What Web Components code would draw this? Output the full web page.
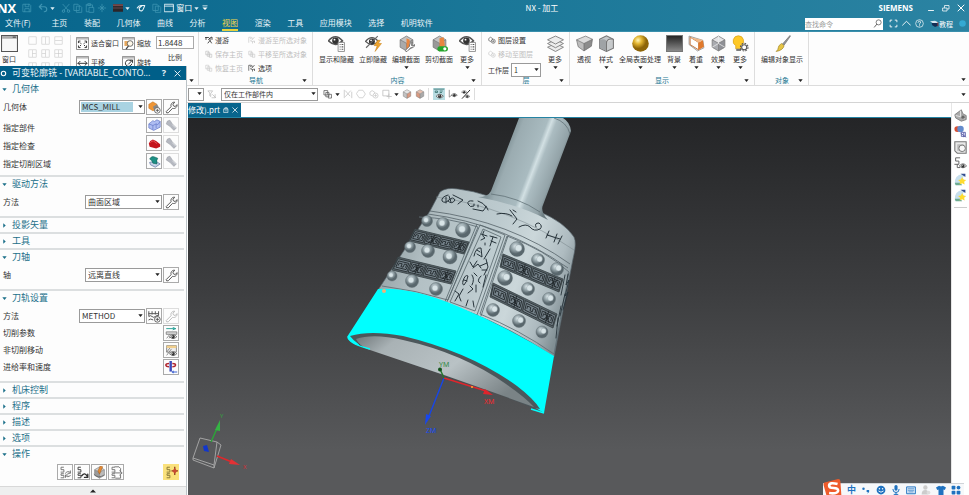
<!DOCTYPE html>
<html lang="zh-CN">
<head>
<meta charset="utf-8">
<title>NX - 加工</title>
<style>
html,body{margin:0;height:100%}
body{font:8px/10px "Noto Sans CJK SC","Noto Sans",sans-serif;color:#333;background:#fff;overflow:hidden}
</style>
</head>
<body>
<nx-app></nx-app>
<script>
const grid = (extra) => `<rect x="1.5" y="1.5" width="13" height="13" fill="none" stroke="#c4c4c4"/>${extra}`;
const wrench = c => `<path d="M1.500 13 7.500 7C6.500 4 9 1 12 1.500L9.800 4l.6 2 2 .8L15 4.500C15 8 12 10 9.300 9L4 14.500Q1.500 15.500 1.500 13z" fill="#fff" stroke="${c}" stroke-width="1.200" stroke-linejoin="round"/>`;
const torch = '<path d="M3 2.500 6 1.500 9 6l5 5-3 3-5-5L1.500 6z" fill="#b5b8c0" stroke="#9a9da5" stroke-width=".7"/><path d="m9 7 4 4" stroke="#e4e6ea"/>';
const eye = (x, y, s) => `<g transform="translate(${x} ${y}) scale(${s})"><path d="M-6 0Q0-7 6 0Q0 6-6 0z" fill="#fff" stroke="#555" stroke-width="1.300"/><circle r="2.800" fill="#333"/><circle cx="-.8" cy="-1" r=".8" fill="#fff"/></g>`;
const cube = (a, b, c) => `<path d="M2 4.500 8 1l6 3.500-6 3.300z" fill="${a}"/><path d="M2 4.500v7L8 15V7.800z" fill="${b}"/><path d="M14 4.500v7L8 15V7.800z" fill="${c}"/><path d="M2 4.500 8 1l6 3.500v7L8 15l-6-3.500zM2 4.500l6 3.300 6-3.300M8 7.800V15" fill="none" stroke="#777" stroke-width=".7"/>`;
const list = '<path d="M9.500 7h6v8.500h-6z" fill="#fff" stroke="#888" stroke-width=".8"/><path d="M11 9h.8m1 0h1.600M11 11.200h.8m1 0h1.600M11 13.400h.8m1 0h1.600" stroke="#555"/>';
const person = c => `<path d="M1.500 2.500h5M1.500 2.500v11M4 6l4-3 1 4 4-5M8 7l-3 3 4 1v4M9 11l4-1v4" fill="none" stroke="${c}" stroke-width="1.300"/>`;
const pages = c => `<path d="M1.500 2.500h6v7h-6zM4.500 5.500h5v7h-5zM8.500 8.500h5v6h-5z" fill="#fff" stroke="${c}" stroke-width="1.200"/>`;
const ess = c => `<path d="M6 1.500H2.500v3H6v3H2M6 9.500H2.500v2H6v3H2" fill="none" stroke="${c}" stroke-width="1.200"/>`;
const layers = c => `<path d="M1.500 5 5 2.500 9 5v4L5.500 11 1.500 9z" fill="#fff" stroke="${c}" stroke-width="1.200"/><circle cx="10.500" cy="10.500" r="4" fill="#fff" stroke="${c}" stroke-width="1.200"/><path d="M8 10.500h5M10.500 8v5" stroke="${c}"/>`;
const line = (d, c = '#555', w = 1.2) => `<path d="${d}" fill="none" stroke="${c}" stroke-width="${w}" stroke-linecap="round" stroke-linejoin="round"/>`;
const frame = '<path d="M.6.6h14.800v14.800H.6z" fill="#fff" stroke="#777"/><path d="M1 1h14v2.200H1z" fill="#bbb"/>';

const ICONS = {
  down: '<path d="M1 4h14l-7 9z" fill="currentColor"/>',
  right: '<path d="M4 1v14l8-7z" fill="currentColor"/>',
  up: '<path d="M0 12h16L8 4z" fill="currentColor"/>',
  customize: '<path d="M3 3h10v1.500H3zM3 7h10l-5 5z" fill="currentColor"/>',
  save: line('M2 2h10l2 2v10H2zM5 2v4h6V2M4.500 14V9h7v5', 'currentColor'),
  undo: line('M6 2 2 6l4 4M2 6h8q4 0 4 4t-4 4', 'currentColor', 1.8),
  cut: line('M3 2l8 9M13 2 5 11', 'currentColor') + '<g fill="none" stroke="currentColor" stroke-width="1.500"><circle cx="4" cy="13" r="2"/><circle cx="12" cy="13" r="2"/></g>',
  copy: line('M2 2h6l2 2v8H2zM6 5h6l2 2v8H6z', 'currentColor'),
  paste: line('M2 3h10v4M2 3v11h4M5 1h4v3H5zM7 7h7v8H7z', 'currentColor'),
  cross: line('M8 2v12M2 8h12M5 5l6 6M11 5l-6 6', 'currentColor'),
  dark: '<path d="M0 2h16v12H0z" fill="#2c2528"/><path d="M0 2h16v3H0z" fill="#774a4c"/><path d="M0 8h16" stroke="#806066"/>',
  touch: line('M2 8q2-4 6-4h6l-2 5q-2 5-6 3l-1-4 5-4', '#e9f5f9', 1.7),
  windowW: line('M1 2h14v12H1zM1 5h14', '#e8f4f8', 1.4),
  min: line('M3 13h10', '#fff', 1.8),
  restore: line('M2 8h8v6H2zM5 7V3h9v7h-3', '#fff', 1.5),
  close: line('M2 2l12 12M14 2 2 14', '#fff', 2),
  gear: '<circle cx="8" cy="8" r="5" fill="none" stroke="#fff" stroke-width="2.500"/>',
  search: '<circle cx="10" cy="6" r="4.500" fill="none" stroke="#555" stroke-width="1.300"/><path d="M7 9l-5 6" stroke="#555" stroke-width="1.600"/>',
  full: line('M2 5V2h3M11 2h3v3M14 11v3h-3M5 14H2v-3', '#fff', 1.6),
  chev: line('M1 11l7-7 7 7', '#fff', 1.6),
  help: '<circle cx="8" cy="8" r="6.800" fill="none" stroke="#fff" stroke-width="1.200"/>' + line('M5.500 6Q6 3.500 8.500 4T9.500 7Q8 8 8 9.500M8 12v.3', '#fff', 1.4),
  hat: '<path d="M0 4l9-1 6 3-8 3z" fill="#d5e6f0"/><path d="M3 7h11v5l-5 2-5-3z" fill="#132e55"/><path d="M14 6v7" stroke="#a33" stroke-width="1.500"/>',
  dot: '<circle cx="8" cy="8" r="7.500" fill="#35a9d3"/>',
  window: '<path d="M.5.5h15v15H.5z" fill="#f7f7f7" stroke="#555"/><path d="M1 1h14v2.500H1z" fill="#aaa"/><path d="M11 2h3" stroke="#444"/>',
  g1: grid(''), g2: grid('<path d="M8 2v12" stroke="#c4c4c4"/>'), g3: grid('<path d="M2 8h12" stroke="#c4c4c4"/>'),
  g4: grid('<path d="M8 2v12M8 8h6" stroke="#c4c4c4"/>'), g5: grid('<path d="M8 2v12M2 8h6" stroke="#c4c4c4"/>'), g6: grid('<path d="M8 2v12M2 8h12" stroke="#c4c4c4"/>'),
  fit: frame + line('M3 7V5h2M11 5h2v2M13 11v2h-2M5 13H3v-2M5 7l1 1M11 7l-1 1M5 11l1-1M11 11l-1-1', '#333'),
  zoom: frame + '<path d="M3 5h6v6H3z" fill="#e6a75c"/><circle cx="10" cy="8" r="3.500" fill="#fff8e8" stroke="#555"/><path d="M8 11l-3 4" stroke="#444" stroke-width="1.500"/>',
  pan: frame + line('M2.500 9h11M5 6.500 2.500 9 5 11.500M11 6.500 13.500 9 11 11.500', '#333'),
  rotate: frame + line('M11 6a4 4 0 1 0 1 4M8 10l5-5M10 5h3v3', '#333'),
  walk: line('M1 3h6M2 3v4M7 7l3-3v5l-4 5M10 9l3 5M10 4l4-2v5', '#333', 1.7),
  walkTo: person('#c5c5c5'), home: pages('#bbb'), home2: pages('#c8c8c8'), panTo: pages('#c5c5c5'), options: person('#333'),
  show: eye(7, 5.5, 1.1) + list,
  hide: eye(6.5, 6, 1) + '<path d="M1 12 12 1" stroke="#666"/><path d="M12 5 8.500 10h3l-2 5.500 6-7.500h-3l2-3z" fill="#f0a52e" stroke="#c98014" stroke-width=".5"/>',
  section: cube('#c4c4c4', '#aaa', '#999') + '<path d="M8 3l3 1.500v8L8 14z" fill="#e88640"/><g transform="translate(6 6) scale(.65)">' + wrench('#666') + '</g>',
  clip: cube('#c4c4c4', '#999', '#aaa') + '<path d="M8 3l4-1 1 8-5 2z" fill="#e88640"/><rect x="6" y="10.500" width="10" height="5" rx="2.500" fill="#25a52b"/><circle cx="13" cy="13" r="1.500" fill="#fff"/>',
  layer: layers('#444'), layerMove: layers('#c5c5c5'),
  stack: '<g fill="#ececec" stroke="#777" stroke-width=".8"><path d="M.5 11.500l7.500-3.500 7.500 3.500-7.500 4z"/><path d="M.5 8l7.500-3.500L15.500 8 8 12z"/><path d="M.5 4.500L8 1l7.500 3.500-7.500 4z"/></g>',
  persp: '<path d="M.5 4.500 9 1l6.500 3-8 4z" fill="#dcdcdc"/><path d="M.5 4.500 7.500 8v7L2 11z" fill="#bdbdbd"/><path d="M15.500 4l-8 4v7l7-4.500z" fill="#8c8c8c"/><path d="M.5 4.500 9 1l6.500 3-1 6.500-7 4.500L2 11zM.5 4.500l7 3.500 8-4M7.500 8v7" fill="none" stroke="#666" stroke-width=".6"/>',
  style: '<path d="M1.500 4 8 .8l6.500 3.200v8.500L8 15.500l-6.500-3z" fill="#c6c9cb" stroke="#777"/><path d="M1.500 4.500q7-2 6.500 3v7.500l-6.500-3z" fill="#9fa3a6"/><path d="M8 7q1-4 6-3" fill="#ddd" stroke="#777"/><path d="M8 6v9" stroke="#777"/>',
  gold: '<radialGradient id="g" cx=".35" cy=".3"><stop stop-color="#fff7bc"/><stop offset=".45" stop-color="#e3b532"/><stop offset="1" stop-color="#8e6508"/></radialGradient><circle cx="8" cy="8" r="7.800" fill="url(#g)"/>',
  bg: '<linearGradient id="b" x2="0" y2="1"><stop stop-color="#222"/><stop offset="1" stop-color="#8d8d8d"/></linearGradient><path d="M.5.5h15v15H.5z" fill="url(#b)" stroke="#777"/>',
  weight: '<path d="M1 1 14 5l1 7-6 3-8-6z" fill="#e9e9e9" stroke="#888" stroke-width=".7"/><path d="M2 2l8 5v7L2 9z" fill="#fff" stroke="#c6743c" stroke-width=".9"/><path d="M10 7l4-2 1 6-5 3z" fill="#e0792c"/><path d="M2 2l9 2 3 1-4 2z" fill="#f0b888"/>',
  effect: cube('#e4e4e6', '#a9abb0', '#8e9096') + '<path d="M2 11.500 8 8l6 3.500M8 8V1" stroke="#eee" stroke-width=".7" fill="none"/>',
  bulb: '<path d="M6 .7a5 5 0 0 0-2.500 9.300v3h5v-3A5 5 0 0 0 6 .7z" fill="#ffc928" stroke="#d39a10" stroke-width=".6"/><path d="M4 13h4.500v2H4z" fill="#777"/><circle cx="11.500" cy="11.500" r="2.400" fill="#fff" stroke="#555" stroke-width="1"/><circle cx="11.500" cy="11.500" r="3.600" fill="none" stroke="#555" stroke-width="1" stroke-dasharray="1.600 1.200"/>',
  brush: '<path d="M15 .5 8 8.500l1.500 1L15.500 1z" fill="#999" stroke="#666" stroke-width=".6"/><path d="M7 8l2.500 2q-1 4.500-7.500 5.500 2-1.500 2-3.500T7 8z" fill="#e6c545" stroke="#9c7f20" stroke-width=".6"/>',
  filter: line('M2 3h7L6 7v5L4.500 11V7zM9 9l5 5M13 9v5H8', '#bbb'),
  sel: pages('#555'), selA: line('M2 2v12M14 5v9M4 3l7 8M12 3 4 12', '#c0c0c0'),
  hex: line('M5 2h6l4 6-4 6H5L1 8z', '#c8c8c8'), selB: layers('#c5c5c5'), selC: line('M2 2h9v9H2zM11 8v7M8 12h7', '#bbb'),
  cubeO: cube('#e5e5e5', '#c2c2c2', '#d89a82'), cubeR: cube('#e5c0b0', '#d99a80', '#aaa'),
  view1: '<path d="M1 1.500h14M3 4h3v2H3zM9 4h4M9 6h3" stroke="#2f6a66" fill="none"/>' + eye(9, 11, .8), view2: line('M2 2v11l5-4', '#777') + eye(10, 10, .8),
  view3: line('M2 15 14 2', '#333', 1.6) + eye(5, 5, .7) + eye(10, 12, .7),
  lock: line('M3 5h10v10H3zM5 5V2h6v3M8 8v3', '#fff', 1.8),
  newGeo: '<path d="M1 4l5-3 5 3v6l-5 2-5-3z" fill="#ef9636" stroke="#b96b1a" stroke-width=".6"/><path d="M6 7l5-3 2 3v6l-4 1z" fill="#888"/><circle cx="11.500" cy="11.500" r="3.500" fill="#fff" stroke="#555"/><path d="M9.500 11.500h4M11.500 9.500v4" stroke="#555"/>',
  wrench: wrench('#555'), wrenchOff: wrench('#bbb'), torch,
  part: '<path d="M1 6l5-4 2 1 3-2 4 2v7l-8 4-6-3z" fill="#aebdf2" stroke="#5f72c4" stroke-width=".8"/><path d="M1 6l5 2 4-2 2 1 3-4M6 8v5M10 6v5" fill="none" stroke="#5f72c4" stroke-width=".8"/>',
  check: '<path d="M1 8q1-4 5-5l4 2 5 4v3l-5 2-8-2z" fill="#c4151d"/><path d="M3 7q2-3 4-2l4 3" stroke="#ef6468" fill="none"/>',
  area: '<path d="M2 9l8-1 5 3-6 4-6-3z" fill="#c7d4e8" stroke="#6f83ad"/><path d="M2 5q2-4 5-3l5 2q-2 2-1 7l-5-1Q5 6 2 5z" fill="#1c8f84" stroke="#0d5d58" stroke-width=".7"/>',
  newMethod: line('M1 2v6q2-2 4 0t4 0 4-1V2M1 4.500h12M1 12q2-2 5 0M5 2v3M9 2v3', '#555') + '<circle cx="11.500" cy="11.500" r="3.500" fill="#fff" stroke="#444"/><path d="M9.500 11.500h4M11.500 9.500v4" stroke="#444"/>',
  cutp: line('M2 2h11M10 .7 13 2l-3 1.300', '#2aa198') + '<path d="M1.500 6h13v3h-13z" fill="#ddd" stroke="#777"/><path d="M2 14l4-5M5 14l3-4" stroke="#777"/>' + eye(10, 12, .75),
  noncut: '<path d="M2 2h12v8H2z" fill="#eee" stroke="#777"/><path d="M2 2h12v3H2z" fill="#f1cf8d"/><path d="M2 14l6-8M2 10l4-5" stroke="#777"/>' + eye(10, 12, .75),
  feed: '<path d="M5.500 0h3v13h-3z" fill="#3c4bbb"/><path d="M1 5q0-2 4-2M9 3q4 0 4 2t-4 2M1 5q0 2 4 2" fill="none" stroke="#b02630" stroke-width="1.800"/><path d="M9 13.500h6M10.500 12 9 13.500l1.500 1.500" stroke="#3f63d0" stroke-width="1.300" fill="none"/>',
  gen: ess('#777') + line('M8 9q2-4 6-1M14 6v3h-3M14 12q-3 3-6 0M8 14v-3h3', '#777'),
  replay: ess('#444') + line('M7 12q4-5 7 1M14.500 10v4h-4', '#333', 1.7),
  verify: cube('#cfcfcf', '#9a9a9a', '#bbb') + '<path d="M9 0 6 6l2 4 4-9z" fill="#e58a32" stroke="#9d571a" stroke-width=".6"/><path d="M1 10q5 6 13 1" stroke="#666" fill="none"/>',
  post: ess('#777') + line('M6 1h5l2 2v3M13 11v4H7M5 8.500h9M12 6l3 2.500-3 2.500', '#777'),
  tool: ess('#8a7a3a') + '<path d="M8 6h8M12 1v10" stroke="#8c3d1e" stroke-width="1.600"/><path d="M12 2.500l3 3.500-3 3.500L9 6z" fill="#c84b33"/>',
  nav1: '<path d="M1 7l8-6 2 5 4 2v5l-6 2-7-4z" fill="#aaa" stroke="#777"/><path d="M2 8q7 1 11 4M8 2v7" stroke="#eee" fill="none"/><circle cx="11" cy="10" r="2" fill="#666"/>',
  nav2: '<circle cx="4" cy="5" r="3.500" fill="#d65034"/><circle cx="8" cy="5" r="4" fill="#648ccc"/><path d="M9 9h5v5H9z" fill="#eef" stroke="#5258a0"/><path d="M8 10l7 5M12 9v6" stroke="#5258a0"/>',
  nav3: '<path d="M1 1h14v14H4L1 12z" fill="#e8e8e8" stroke="#777" stroke-width="1.300"/><path d="M4 4h8v8H4z" fill="#bbb"/><circle cx="10" cy="9" r="4" fill="#f8f8f8" stroke="#777" stroke-width="1.200"/>',
  nav4: line('M7 1H2v4h4v4H1M4 9v4h3', '#666') + eye(11, 11, .75),
  nav5: '<path d="M3 5q4-5 10-3l-2 4q4 5-3 7l-7 1q-1-5 2-9z" fill="#c7dfed"/><path d="M8 1h6v4z" fill="#344e90"/><path d="M1 12h7l2 3H2z" fill="#6cab91"/><path d="M10 5l1.500 3 3.500.5-2.500 2.300.6 3.500-3.100-1.600-3.100 1.600.6-3.500L5 8.500 8.500 8z" fill="#ffdc2f"/>',
  sogou: '<path d="M1 3 13 0q2 0 2 2l1 14H3L0 5q0-2 1-2z" fill="#ee5b2b"/><path d="M12.500 4.500Q5 2.500 5 6q0 2 4 2t4 2.500Q12 13.500 5 12.500" fill="none" stroke="#fff" stroke-width="2.300"/>',
  comma: '<circle cx="4" cy="6" r="2" fill="#1f72c0"/><path d="M9 8h4v3l-3 3 1-3H9z" fill="#1f72c0"/>',
  smile: '<circle cx="8" cy="8" r="7" fill="#1f72c0"/><circle cx="5.500" cy="6" r="1.200" fill="#fff"/><circle cx="10.500" cy="6" r="1.200" fill="#fff"/><path d="M4 9.500q4 4 8 0" stroke="#fff" stroke-width="1.500" fill="none"/>',
  mic: '<rect x="5.500" y="0" width="5" height="9" rx="2.500" fill="#1f72c0"/>' + line('M3 7q0 5 5 5t5-5M8 12v3M5 15h6', '#1f72c0', 1.6),
  keys: '<path d="M1 3h14v11H1z" fill="#dceaf7" stroke="#1f72c0" stroke-width="1.500"/><path d="M3 6h10M3 8.500h10M4 11h8" stroke="#1f72c0"/>',
  user: '<circle cx="7" cy="4" r="3.500" fill="#ccc"/><path d="M1 15q0-7 6-7 3 0 4 2v5z" fill="#ccc"/><circle cx="12" cy="12" r="3" fill="#ddd"/>',
  shirt: '<path d="M5 1q3 2 6 0l5 3-2 4-2-1v9H4V7L2 8 0 4z" fill="#1f72c0"/>',
  apps: '<g fill="#1f72c0"><rect x="1" y="1" width="6" height="6" rx="1.500"/><rect x="9" y="1" width="6" height="6" rx="3"/><rect x="1" y="9" width="6" height="6" rx="1.500"/><rect x="9" y="9" width="6" height="6" rx="1.500"/></g>'
};

function define(tag, css, html) {
  customElements.define(tag, class extends HTMLElement {
    connectedCallback() {
      if (this.shadowRoot) return;
      const root = this.attachShadow({ mode: 'open' });
      const body = typeof html === 'function' ? html(this) : html;
      root.innerHTML = `<style>*{box-sizing:border-box}button,input,select{font:inherit;color:inherit}button{margin:0;padding:0;border:0;background:none}${css}</style>${body}`;
    }
  });
}

define('nx-icon', ':host{display:inline-block;flex:none;width:10px;height:10px}svg{display:block;width:100%;height:100%}',
  el => `<svg viewBox="0 0 16 16" aria-hidden="true">${ICONS[el.getAttribute('name')] || ''}</svg>`);

define('nx-caret', ':host{display:inline-block;flex:none;width:5px;height:5px;color:#222}nx-icon{display:block;width:100%;height:100%}',
  el => `<nx-icon name="${el.getAttribute('dir') || 'down'}"></nx-icon>`);

define('nx-select', `:host{display:inline-block;flex:none;height:14px}
  div{position:relative;height:100%}
  select{appearance:none;display:block;width:100%;height:100%;margin:0;padding:0 8px 0 2px;border:1px solid #9a9a9a;border-radius:0;background:#fff;line-height:10px;outline:0}
  :host([marked]) select{background:linear-gradient(#a9d3e2,#a9d3e2) 1px 1px/calc(100% - 12px) calc(100% - 2px) no-repeat #fff}
  nx-caret{position:absolute;right:2px;top:calc(50% - 3px);pointer-events:none}`,
  el => `<div><select aria-label="${el.getAttribute('label') || ''}"><option>${el.getAttribute('value') || ''}</option></select><nx-caret></nx-caret></div>`);

define('nx-title-bar', `:host{display:grid;grid-template-columns:1.28fr auto 1fr;align-items:center;height:16px;color:#fff}
  .quick{display:flex;align-items:center;gap:2px;color:#3f95b3}
  b.nx{font:bold 13px/16px "Open Sans","Noto Sans",sans-serif;color:#fff;margin:0 4px 0 -3px}
  nx-caret{color:#dceef4}
  .quick button{display:flex;align-items:center;gap:2px;color:inherit;line-height:8px}
  .quick .lit{color:#fff}
  .right{display:flex;justify-content:flex-end;align-items:center;gap:7px;padding-right:4px}
  .right b{font:bold 8px/10px "Open Sans",sans-serif;margin-right:7px}
  .right nx-icon{width:8px;height:8px}.right button{display:flex}
  .gap{width:2px}`,
  `<div class="quick"><b class="nx">NX</b>
    <button aria-label="保存"><nx-icon name="save"></nx-icon></button><span class="gap"></span><button aria-label="撤消"><nx-icon name="undo"></nx-icon><nx-caret></nx-caret></button><span class="gap"></span>
    <button aria-label="剪切"><nx-icon name="cut"></nx-icon></button><button aria-label="复制"><nx-icon name="copy"></nx-icon></button><button aria-label="粘贴"><nx-icon name="paste"></nx-icon></button><button aria-label="重复"><nx-icon name="cross"></nx-icon></button><span class="gap"></span>
    <button aria-label="颜色"><nx-icon name="dark"></nx-icon><nx-caret></nx-caret></button><span class="gap"></span><button aria-label="触控"><nx-icon name="touch"></nx-icon></button><span class="gap"></span><button aria-label="切换"><nx-icon name="copy"></nx-icon></button>
    <button class="lit"><nx-icon name="windowW"></nx-icon>窗口<nx-caret></nx-caret></button><nx-icon class="lit" name="customize" style="width:8px;height:8px"></nx-icon></div>
  <span>NX - 加工</span>
  <div class="right"><b>SIEMENS</b><button aria-label="最小化"><nx-icon name="min"></nx-icon></button><button aria-label="还原"><nx-icon name="restore"></nx-icon></button><button aria-label="关闭"><nx-icon name="close"></nx-icon></button></div>`);

define('nx-menu-bar', `:host{display:flex;align-items:center;justify-content:space-between;height:15px;color:#e9f4f8;padding-left:5px}
  nav{display:flex;justify-content:space-between;flex:none;width:428px;height:100%}
  nav a{color:inherit;text-decoration:none;line-height:13px;border-bottom:2px solid transparent;white-space:nowrap}
  nav a:first-child{margin-right:4px}
  nav a.on{color:#f2d74e;border-color:#e6d23e}
  .tools{display:flex;align-items:center;gap:4px;padding-right:3px}
  label{display:flex;align-items:center;background:#fff;width:78px;height:12px;padding-right:1px;margin-right:2px}
  input{flex:1;min-width:0;border:0;padding:0;background:none;font-size:7px;height:10px;color:#333;outline:0}input::placeholder{color:#999}
  .tools a{color:#fff;text-decoration:none;font-size:7px;display:flex;align-items:center;margin:0 2px}
  .tools nx-icon{width:9px;height:9px}.tools .dot{width:7px}.tools button{display:flex}`,
  `<nav>${['文件(F)', '主页', '装配', '几何体', '曲线', '分析', '视图', '渲染', '工具', '应用模块', '选择', '机明软件'].map(t => `<a href="#"${t === '视图' ? ' class="on"' : ''}>${t}</a>`).join('')}</nav>
  <div class="tools"><label><input placeholder="查找命令" aria-label="查找命令"><nx-icon name="search"></nx-icon></label>
  <button aria-label="全屏"><nx-icon name="full"></nx-icon></button><button aria-label="折叠"><nx-icon name="chev"></nx-icon></button><button aria-label="帮助"><nx-icon name="help"></nx-icon></button>
  <a href="#"><nx-icon name="hat"></nx-icon>教程</a><nx-icon class="dot" name="dot"></nx-icon></div>`);

define('nx-group', `:host{display:flex;flex-direction:column;flex:none;height:100%;padding:3px 5px 0 6px;border-right:1px solid #ddd}
  .body{display:flex;flex:1;min-height:0;gap:var(--gap,5px);align-items:flex-start}
  .foot{display:grid;grid-template-columns:5px 1fr 5px;align-items:center;text-align:center;height:10px;font-size:7px;color:#1c7792;line-height:10px}
  .foot span{grid-column:2}`,
  el => `<div class="body"><slot></slot></div><div class="foot"><span>${el.getAttribute('label') || ''}</span><nx-caret></nx-caret></div>`);

define('nx-tool', `:host{display:block;flex:none;min-width:18px}
  button{display:flex;flex-direction:column;align-items:center;width:100%;font-size:7px;line-height:10px;white-space:nowrap}
  nx-icon{width:17px;height:17px;margin-bottom:2px}nx-caret{margin-top:1px}`,
  el => `<button><nx-icon name="${el.getAttribute('icon')}"></nx-icon><slot></slot>${el.hasAttribute('menu') ? '<nx-caret></nx-caret>' : ''}</button>`);

define('nx-mini', `:host{display:block;height:14px;font-size:7px}
  button{display:flex;align-items:center;gap:2px;height:10px;white-space:nowrap;line-height:10px}
  :host([disabled]) button{color:#bdbdbd}
  nx-icon{width:var(--mini,8px);height:var(--mini,8px)}`,
  el => `<button${el.hasAttribute('disabled') ? ' disabled' : ''}><nx-icon name="${el.getAttribute('icon')}"></nx-icon><slot></slot></button>`);

define('nx-ribbon', `:host{display:flex;height:54px;background:#fdfdfd;border-bottom:1px solid #dcdcdc}
  .grid{display:grid;grid-template-columns:repeat(3,9px);gap:4px;padding:1px 2px 0 5px}
  .grid nx-icon{width:9px;height:9px}
  .win{padding-right:5px;border-right:1px solid #ddd;display:flex}
  .view{display:grid;grid-template-columns:auto auto;gap:6px 3px;--mini:13px}
  .view nx-mini{height:13px;padding-top:3px}
  .scale{display:flex;flex-direction:column;align-items:center;gap:3px;font-size:7px;padding-top:1px}
  .scale input{width:38px;height:13px;border:1px solid #aaa;background:#fff;padding:0 1px;font-size:8px}
  .col{display:flex;flex-direction:column}
  .work{display:flex;align-items:center;gap:2px;font-size:7px;height:14px}
  .work nx-select{width:30px}
  .end{flex:1;display:flex;justify-content:flex-end;align-items:flex-end;padding:3px}
  .first{padding:3px 4px 0 0}
  .tight{--gap:4px;padding-left:5px}`,
  `<nx-group class="first"><nx-tool icon="window" menu>窗口</nx-tool><div class="win"><div class="grid">${['g1','g2','g3','g4','g5','g6','g6','g6','g6'].map(n => `<nx-icon name="${n}"></nx-icon>`).join('')}</div></div>
    <div class="view"><nx-mini icon="fit">适合窗口</nx-mini><nx-mini icon="zoom">缩放</nx-mini><nx-mini icon="pan">平移</nx-mini><nx-mini icon="rotate">旋转</nx-mini></div>
    <label class="scale"><input value="1.8448">比例</label></nx-group>
  <nx-group label="导航"><div class="col"><nx-mini icon="walk">漫游</nx-mini><nx-mini icon="home" disabled>保存主页</nx-mini><nx-mini icon="home2" disabled>恢复主页</nx-mini></div>
    <div class="col"><nx-mini icon="walkTo" disabled>漫游至所选对象</nx-mini><nx-mini icon="panTo" disabled>平移至所选对象</nx-mini><nx-mini icon="options">选项</nx-mini></div></nx-group>
  <nx-group label="内容"><nx-tool icon="show">显示和隐藏</nx-tool><nx-tool icon="hide">立即隐藏</nx-tool><nx-tool icon="section" menu>编辑截面</nx-tool><nx-tool icon="clip">剪切截面</nx-tool><nx-tool icon="show" menu>更多</nx-tool></nx-group>
  <nx-group label="层"><div class="col"><nx-mini icon="layer">图层设置</nx-mini><nx-mini icon="layerMove" disabled>移动至图层</nx-mini><label class="work">工作层<nx-select label="工作层" value="1"></nx-select></label></div><nx-tool icon="stack" menu>更多</nx-tool></nx-group>
  <nx-group class="tight" label="显示"><nx-tool icon="persp">透视</nx-tool><nx-tool icon="style" menu>样式</nx-tool><nx-tool icon="gold" menu>全局表面处理</nx-tool><nx-tool icon="bg" menu>背景</nx-tool><nx-tool icon="weight" menu>着重</nx-tool><nx-tool icon="effect" menu>效果</nx-tool><nx-tool icon="bulb" menu>更多</nx-tool></nx-group>
  <nx-group label="对象"><nx-tool icon="brush">编辑对象显示</nx-tool></nx-group>
  <div class="end"><nx-caret></nx-caret></div>`);

define('nx-selection-bar', `:host{display:flex;align-items:center;gap:2px;height:17px;padding:0 3px 0 188px;border-bottom:1px solid #d4d4d4;background:#fff;font-size:7px}
  .a{width:16px}.b{width:97px;margin:0 2px}.a,.b{height:13px}nx-icon{margin-left:1px}
  i{width:1px;height:12px;background:#ddd;margin:0 1px}.on{background:#b9dde2;width:12px;height:12px}
  .end{margin-left:auto}`,
  `<nx-select class="a" label="类型过滤器"></nx-select><nx-icon name="filter"></nx-icon><nx-select class="b" label="选择范围" value="仅在工作部件内"></nx-select>
   <nx-icon name="sel"></nx-icon><nx-caret></nx-caret><nx-icon name="selA"></nx-icon><nx-icon name="hex"></nx-icon><nx-icon name="selB"></nx-icon><nx-icon name="selC"></nx-icon><nx-caret></nx-caret><nx-icon name="cubeO"></nx-icon><nx-icon name="cubeR"></nx-icon><i></i>
   <nx-icon class="on" name="view1"></nx-icon><nx-icon name="view2"></nx-icon><nx-icon name="view3"></nx-icon><i></i><nx-caret class="end"></nx-caret>`);

define('nx-doc-tabs', `:host{display:flex;height:15px;border-bottom:1px solid #2584a4;background:#fff}
  button{display:flex;align-items:center;gap:3px;padding-right:3px;background:#08658d;color:#fff;white-space:nowrap}
  nx-icon{width:6px;height:6px}`,
  `<button>修改).prt<nx-icon name="lock"></nx-icon><nx-icon name="close"></nx-icon></button>`);

define('nx-rail', `:host{display:flex;flex-direction:column;align-items:center;gap:3px;background:#fff;border-left:1px solid #e6e6e6;padding-top:6px}
  button{display:flex}nx-icon{width:13px;height:13px}hr{width:13px;margin:2px 0;border:0;border-top:1px solid #ccc}`,
  `${[['nav1', '装配导航器'], ['nav2', '约束导航器'], ['nav3', '部件导航器'], ['nav4', '工序导航器'], ['nav5', '机床导航器'], ['nav5', '重用库']].map(([n, t]) => `<button aria-label="${t}"><nx-icon name="${n}"></nx-icon></button>`).join('')}<hr>`);

const stud = ([x, y, r, dx = -1]) => `<circle cx="${x}" cy="${y}" r="${r}" fill="url(#ball)" stroke="#59656a" stroke-width=".4"/><circle cx="${x + dx}" cy="${y - 1}" r="${r * .45}" fill="#d8e4e7" stroke="#78868b" stroke-width=".3"/>`;
const studs = [[427,221,5.5],[443,224,6.5],[463,230,7.5],[410,247,5.5],[428,251,6.5],[450,257,7],[392,276,5],[412,281,6.5],[436,289,6.5],
  [517,249,7.5,1.5],[538,260,6.5,1.5],[557,269,6.5,1.5],[505,278,7.5,1.5],[528,289,6.5,1.5],[549,299,6.5,1.5],[493,310,6.5,1.5],[519,321,6.5,1.5],[542,332,6,1.5]].map(stud).join('');

/* Draws an engraved band inside a four-cornered area: corners run top-left, top-right, bottom-right, bottom-left. */
function frieze([a, b, c, d], cells) {
  const at = (u, v) => [0, 1].map(i => ((a[i] * (1 - u) + b[i] * u) * (1 - v) + (d[i] * (1 - u) + c[i] * u) * v).toFixed(1)).join(' ');
  const poly = pts => 'M' + pts.map(p => at(...p)).join('L');
  const box = (u0, v0, u1, v1) => poly([[u0, v0], [u1, v0], [u1, v1], [u0, v1]]) + 'Z';
  let cellPaths = '', marks = '';
  for (let i = 0; i < cells; i++) {
    const u = k => (i + k) / cells;
    cellPaths += box(u(.05), .12, u(.95), .88);
    marks += box(u(.15), .26, u(.85), .74) + poly([[u(.25), .6], [u(.25), .4], [u(.45), .4], [u(.45), .62], [u(.6), .62], [u(.6), .38], [u(.76), .38], [u(.76), .62]]);
    if (i % 2) marks += poly([[u(.5), .08], [u(.5), .92]]) + poly([[u(.3), .2], [u(.7), .8]]) + poly([[u(.3), .8], [u(.7), .2]]);
  }
  return `<path d="${box(0, 0, 1, 1)}" fill="#59646a" stroke="#353f43" stroke-width=".8"/><path d="${cellPaths}" fill="#75828a" stroke="#262d30" stroke-width=".8"/><path d="${marks}" fill="none" stroke="#20272a" stroke-width=".9"/>`;
}

define('nx-viewport', `:host{display:block;position:relative;min-width:0;background:linear-gradient(#242527,#3c3d3f 45%,#58595b 88%,#58595b)}
  svg{position:absolute;inset:0;width:100%;height:100%}text{font:7px "Noto Sans",sans-serif}.small{font-size:6px}`,
  `<svg viewBox="188 118 763 377" preserveAspectRatio="xMinYMin meet" role="img" aria-label="钟形零件">
  <defs>
    <linearGradient id="shaft" gradientUnits="userSpaceOnUse" x1="503" y1="155" x2="558" y2="176"><stop stop-color="#83959a"/><stop offset=".12" stop-color="#9bacb1"/><stop offset=".5" stop-color="#a9bbc0"/><stop offset=".57" stop-color="#d2e0e3"/><stop offset=".65" stop-color="#abbcc1"/><stop offset=".9" stop-color="#93a3a8"/><stop offset="1" stop-color="#6c7c81"/></linearGradient>
    <linearGradient id="body" gradientUnits="userSpaceOnUse" x1="395" y1="235" x2="570" y2="300"><stop stop-color="#98a5a9"/><stop offset=".2" stop-color="#b3c0c4"/><stop offset=".5" stop-color="#bdcbcf"/><stop offset=".7" stop-color="#cbd7da"/><stop offset=".88" stop-color="#aebbc0"/><stop offset="1" stop-color="#818f94"/></linearGradient>
    <linearGradient id="inner" x2="1" y2=".5"><stop stop-color="#6f777a"/><stop offset=".2" stop-color="#a9b2b5"/><stop offset=".6" stop-color="#b9c2c5"/><stop offset="1" stop-color="#7a8386"/></linearGradient>
    <radialGradient id="ball" cx=".4" cy=".32"><stop stop-color="#dfeaed"/><stop offset=".45" stop-color="#9faeb3"/><stop offset="1" stop-color="#59676d"/></radialGradient>
  </defs>
  <path d="M440 192Q446 187 458 189Q474 191 488 196Q516 202 540 212Q564 222 574 237Q577 243 573 259L554 357Q470 300 378 290L430 211Z" fill="url(#body)" stroke="#56636a" stroke-width=".7"/>
  <path d="M519 118H563Q570 122 571 131L543 205Q540 211 548 220Q520 205 478 197Q488 197 491 191Z" fill="url(#shaft)"/>
  <path d="M554 118Q567 122 570 134M491 194Q518 197 540 212" fill="none" stroke="#59686e" stroke-width=".7"/>
  <path d="M436 197Q510 207 574 250" fill="none" stroke="#7e8c91" stroke-width=".6"/>
  <path d="M430 211Q510 221 570 264M428 214Q505 224 568 268" fill="none" stroke="#556268" stroke-width=".8"/>
  <path d="M419 217Q450 218 478 227L448 300Q415 290 382 286M507 236Q545 250 569 272L554 354Q520 330 480 314Z" fill="none" stroke="#637077" stroke-width=".9"/>
  <path d="M480 225 505 235 477 315 446 304Z M483 229 501 237 475 311 450 302Z M477 224 444 304M508 236 481 316" fill="none" stroke="#56656a" stroke-width=".8"/>
  ${frieze([[415,229],[469,242],[464,254],[409,241]], 4)}${frieze([[398,257],[456,271],[451,284],[392,270]], 4)}
  ${frieze([[503,254],[563,279],[559,292],[500,267]], 4)}${frieze([[493,283],[557,314],[553,328],[490,297]], 4)}
  ${studs}
  <g fill="none" stroke="#27333a" stroke-width="1" stroke-linecap="round" stroke-linejoin="round">
    <path d="M448 195q-7 2-6 6 3 3 7-1 4-4 6 0-3 5-7 1M446 197v6M449 196l2 6M453 195l10 5-5 4M473 201q-6-1-5 3 2 4 6 2v-2M478 201q6 2 8 6l-3 4-10-2M478 205v2M486 206l2 4M497 214q9-2 15 2M510 210l7 9-4 5M513 210l3 2M519 227q7-4 11 0 4 5 10 2 3-3-1-6-5 0-3 4M549 231l-3 7M547 235l13 4M557 234l-3 8M562 236l-4 8"/>
    <path d="M481 234l6 2M484 231q-3 5 1 7l-4 2M485 243v2M493 237l-3 9M491 241l5 2M490 236l7 2M474 256q2-9 7-8l1 9-5-3M477 250l3 2M490 249l-6 10M470 262l3 5 4-6M473 268l5-4 3 4M480 266l7-3M486 259l2 8-4 8M482 270h5M463 281q2-7 5-5-1 6-4 9-2 0-1-4M464 280l3 1M472 275q3 4 0 10M474 273l3 3M481 276q-5 5-1 7M486 275l-3 12M455 291l4 3-4 7M463 289l-4 7 2 5M470 286l3 3-5 4M476 285v7M468 300l-2 6M473 301l1 6"/>
    <path d="M568 274l-2 11 3-5-4 16 3-4-5 18M565 275l-4 20M565 294l-5 22M561 306l-4 20M558 318l-2 20" stroke-width=".9"/>
  </g>
  <path d="M378 289Q412 287 457 306Q510 328 554 356L544 413Q523 401 510 390Q450 350 400 338Q370 331 353 337L360 346Q350 343 347 337Z" fill="#00ffff"/>
  <path d="M350 336Q370 330 403 336Q470 352 517 386Q534 399 540 409L533 408Q490 390 440 374L367 348Q356 344 350 336Z" fill="#4c575b"/>
  <path d="M356 339Q373 333 403 340Q462 353 506 384Q525 397 534 407Q487 390 444 375L367 349Q359 345 356 339Z" fill="url(#inner)"/>
  <path d="M348 338Q352 345 370 349M531 409l13 4" fill="none" stroke="#00ffff" stroke-width="1.400"/>
  <circle cx="384" cy="291" r="2" fill="#eeb27b"/>
  <g fill="none" stroke-width="1.400"><path d="M444 378 429 416" stroke="#1646e8"/><path d="M444 378l42 13" stroke="#df252c"/><path d="M444 378l-4-9" stroke="#25762d"/></g>
  <path d="M425 425l1-11 5 2z" fill="#1747ed"/><path d="M493 395l-10-1 2-5z" fill="#e0242b"/><circle cx="440" cy="369.500" r="2" fill="#12531b"/><circle cx="472" cy="387" r="1" fill="#ffaf31"/>
  <text x="439" y="367" fill="#348b44">YM</text><text x="484" y="404" fill="#f0292f">XM</text><text x="426" y="433" fill="#164cf4">ZM</text>
  <g fill="none" stroke="#aaa" stroke-width=".9"><path d="M200 438 217 442 214 465 193 458ZM217 442l4 3-7 23-21-8v-2M214 465v3"/></g>
  <path d="M203 446l4-1 2 7-5-1z" fill="#1136cc"/><path d="M211 442 218 426" stroke="#2da239" stroke-width="1.500"/><path d="M220 420l-5 10 5 1z" fill="#35b344"/><path d="M217 456l15 6" stroke="#df282c" stroke-width="1.800"/><path d="M240 465l-11-1 2-5z" fill="#e33135"/>
  <text class="small" x="220" y="418" fill="#35a041">Y</text><text class="small" x="243" y="469" fill="#d42f35">X</text>
  </svg>`);

define('nx-section', `:host{display:block;border-top:2px solid #dcdfe0;margin-right:2px}
  h2{margin:0;font:inherit}
  h2 button{display:flex;align-items:center;gap:5px;width:100%;height:14px;padding-left:2px;font-size:9px;line-height:14px;color:#1b6f89}
  nx-caret{color:#1b6f89}
  .body{display:flex;flex-direction:column;gap:var(--row-gap,2px);padding:3px 5px 6px 3px}`,
  el => { const open = el.hasAttribute('open'); return `<h2><button aria-expanded="${open}"><nx-caret dir="${open ? 'down' : 'right'}"></nx-caret>${el.getAttribute('label')}</button></h2>${open ? '<div class="body"><slot></slot></div>' : ''}`; });

define('nx-row', `:host{display:flex;align-items:center;gap:1px;height:16px}
  .name{flex:1;line-height:10px;white-space:nowrap}:host([low]) .name{align-self:flex-end}
  nx-select{width:66px}nx-select.wide{width:77px}`,
  el => `<span class="name">${el.getAttribute('label')}</span>${el.hasAttribute('value') ? `<nx-select class="${el.hasAttribute('wide') ? 'wide' : ''}" label="${el.getAttribute('label')}" value="${el.getAttribute('value')}"${el.hasAttribute('marked') ? ' marked' : ''}></nx-select>` : ''}<slot></slot>`);

define('nx-button', `:host{display:block;flex:none;width:16px;height:16px}
  button{display:flex;align-items:center;justify-content:center;width:100%;height:100%;border:1px solid #aaa;background:#fdfdfd}
  :host([disabled]) button{border-color:#ddd}:host([accent]) button{background:#fae17c;border-color:#fae17c}
  nx-icon{width:13px;height:13px}`,
  el => `<button aria-label="${el.getAttribute('label') || el.getAttribute('icon')}"${el.hasAttribute('disabled') ? ' disabled' : ''}><nx-icon name="${el.getAttribute('icon')}"></nx-icon></button>`);

define('nx-dialog', `:host{display:flex;flex-direction:column;width:187px;background:#fdfdfd;border-right:1px solid #bcc3c7}
  header{display:flex;align-items:center;height:16px;background:#005f89;color:#e9f3f7;font:9px/12px "Noto Sans","Noto Sans CJK SC",sans-serif;gap:4px;padding-right:5px}
  header nx-icon{width:7px;height:7px}header span{flex:1;white-space:nowrap;margin-left:1px}header button{display:flex;font-weight:bold;line-height:12px;margin-left:4px}
  nx-section:first-of-type{border-top-color:transparent}
  .dense{--row-gap:1px}
  .ops{display:flex;gap:1px;padding-left:54px}.ops nx-button:last-child{margin-left:auto}
  footer{margin-top:auto;height:10px;background:#eeefef;display:flex;justify-content:center;align-items:center;border-top:1px solid #d8d8d8}footer nx-caret{width:6px;height:6px}`,
  `<header><nx-icon name="gear"></nx-icon><span>可变轮廓铣 - [VARIABLE_CONTO...</span><button aria-label="帮助">?</button><button aria-label="关闭"><nx-icon name="close"></nx-icon></button></header>
  <nx-section label="几何体" open><nx-row label="几何体" value="MCS_MILL" marked><nx-button icon="newGeo"></nx-button><nx-button icon="wrench"></nx-button></nx-row>
    <nx-row low label="指定部件"><nx-button icon="part"></nx-button><nx-button icon="torch" disabled></nx-button></nx-row>
    <nx-row low label="指定检查"><nx-button icon="check"></nx-button><nx-button icon="torch" disabled></nx-button></nx-row>
    <nx-row low label="指定切削区域"><nx-button icon="area"></nx-button><nx-button icon="torch" disabled></nx-button></nx-row></nx-section>
  <nx-section label="驱动方法" open><nx-row label="方法" value="曲面区域" wide><nx-button icon="wrench"></nx-button></nx-row></nx-section>
  <nx-section label="投影矢量"></nx-section><nx-section label="工具"></nx-section>
  <nx-section label="刀轴" open><nx-row label="轴" value="远离直线" wide><nx-button icon="wrench"></nx-button></nx-row></nx-section>
  <nx-section class="dense" label="刀轨设置" open><nx-row label="方法" value="METHOD"><nx-button icon="newMethod"></nx-button><nx-button icon="wrenchOff" disabled></nx-button></nx-row>
    <nx-row label="切削参数"><nx-button icon="cutp"></nx-button></nx-row><nx-row label="非切削移动"><nx-button icon="noncut"></nx-button></nx-row><nx-row label="进给率和速度"><nx-button icon="feed"></nx-button></nx-row></nx-section>
  <nx-section label="机床控制"></nx-section><nx-section label="程序"></nx-section><nx-section label="描述"></nx-section><nx-section label="选项"></nx-section>
  <nx-section label="操作" open><div class="ops"><nx-button icon="gen" label="生成"></nx-button><nx-button icon="replay" label="重播"></nx-button><nx-button icon="verify" label="确认"></nx-button><nx-button icon="post" label="列表"></nx-button><nx-button accent icon="tool" label="显示刀具"></nx-button></div></nx-section>
  <footer><nx-caret dir="up"></nx-caret></footer>`);

define('nx-ime-bar', `:host{display:flex;align-items:center;gap:5px;height:12px;background:#f6f8fa;padding-right:3px;color:#1f72c0;font-weight:bold;font-size:9px;border-top:1px solid #d0d4d8}
  nx-icon.logo{width:19px;height:18px;margin-top:-3px}`,
  `<nx-icon class="logo" name="sogou"></nx-icon><span>中</span><nx-icon name="comma"></nx-icon><nx-icon name="smile"></nx-icon><nx-icon name="mic"></nx-icon><nx-icon name="keys"></nx-icon><nx-icon name="user"></nx-icon><nx-icon name="shirt"></nx-icon><nx-icon name="apps"></nx-icon>`);

define('nx-app', `:host{display:flex;flex-direction:column;height:100vh;position:relative;overflow:hidden}
  .head{background:linear-gradient(90deg,#07658c,#1a7798 50%,#2b83a2);border-bottom:1px solid #3a8fac}
  .work{flex:1;min-height:0;display:grid;grid-template-columns:minmax(0,1fr) 18px;padding-left:188px}
  .main{display:flex;flex-direction:column}nx-viewport{flex:1}
  nx-dialog{position:absolute;left:0;top:66px;bottom:0}
  nx-ime-bar{position:absolute;right:5px;bottom:0}`,
  `<div class="head"><nx-title-bar></nx-title-bar><nx-menu-bar></nx-menu-bar></div><nx-ribbon></nx-ribbon><nx-selection-bar></nx-selection-bar>
  <div class="work"><div class="main"><nx-doc-tabs></nx-doc-tabs><nx-viewport></nx-viewport></div><nx-rail></nx-rail></div>
  <nx-dialog></nx-dialog><nx-ime-bar></nx-ime-bar>`);
</script>
</body>
</html>
